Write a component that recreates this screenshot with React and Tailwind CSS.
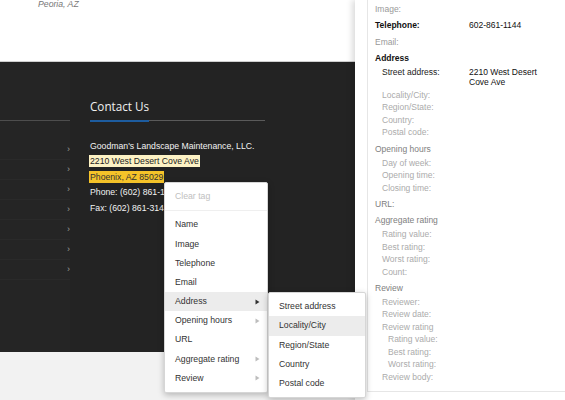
import React from "react";

const panelRows = [
  { label: "Image:", kind: "top", tone: "mid" },
  { label: "Telephone:", kind: "top", tone: "strong", value: "602-861-1144" },
  { label: "Email:", kind: "top", tone: "mid" },
  { label: "Address", kind: "top", tone: "strong" },
  { label: "Street address:", kind: "first", tone: "dark", value: "2210 West Desert Cove Ave" },
  { label: "Locality/City:", kind: "sub", tone: "light" },
  { label: "Region/State:", kind: "sub", tone: "light" },
  { label: "Country:", kind: "sub", tone: "light" },
  { label: "Postal code:", kind: "sub", tone: "light" },
  { label: "Opening hours", kind: "top", tone: "head" },
  { label: "Day of week:", kind: "first", tone: "light" },
  { label: "Opening time:", kind: "sub", tone: "light" },
  { label: "Closing time:", kind: "sub", tone: "light" },
  { label: "URL:", kind: "top", tone: "head" },
  { label: "Aggregate rating", kind: "top", tone: "head" },
  { label: "Rating value:", kind: "first", tone: "light" },
  { label: "Best rating:", kind: "sub", tone: "light" },
  { label: "Worst rating:", kind: "sub", tone: "light" },
  { label: "Count:", kind: "sub", tone: "light" },
  { label: "Review", kind: "top", tone: "head" },
  { label: "Reviewer:", kind: "first", tone: "light" },
  { label: "Review date:", kind: "sub", tone: "light" },
  { label: "Review rating", kind: "sub", tone: "light" },
  { label: "Rating value:", kind: "first2", tone: "light" },
  { label: "Best rating:", kind: "sub2", tone: "light" },
  { label: "Worst rating:", kind: "sub2", tone: "light" },
  { label: "Review body:", kind: "sub", tone: "light" },
];

const toneClass = {
  strong: "text-[#111] font-bold",
  dark: "text-[#222]",
  mid: "text-[#999]",
  head: "text-[#808080]",
  light: "text-[#ababab]",
};

const kindClass = {
  top: "mt-[3.75px]",
  first: "mt-[1.5px] pl-[7px]",
  sub: "pl-[7px]",
  first2: "pl-[13px]",
  sub2: "pl-[13px]",
};

const menuItems = [
  { label: "Name" },
  { label: "Image" },
  { label: "Telephone" },
  { label: "Email" },
  { label: "Address", arrow: "dark", active: true },
  { label: "Opening hours", arrow: "light" },
  { label: "URL" },
  { label: "Aggregate rating", arrow: "light" },
  { label: "Review", arrow: "light" },
];

const subItems = ["Street address", "Locality/City", "Region/State", "Country", "Postal code"];

const Arrow = ({ dark }) => (
  <svg width="5" height="6" viewBox="0 0 5 6" className="shrink-0">
    <path d="M0.5 0.5 L4.5 3 L0.5 5.5 Z" fill={dark ? "#333" : "#bdbdbd"} />
  </svg>
);

const App = () => {
  return (
    <div className="relative w-[565px] h-[400px] overflow-hidden flex font-['Liberation_Sans',Arial,sans-serif]">
      {/* Page behind */}
      <div className="w-[355px] shrink-0 flex flex-col">
        <div className="h-[62px] bg-white border-b border-[#cfcfcf]">
          <p className="pl-[38px] -mt-[3px] text-[8.7px] italic text-[#777] leading-[14px]">
            Peoria, AZ
          </p>
        </div>

        <div className="h-[290px] bg-[#232323] flex">
          {/* Left column */}
          <div className="w-[70px] shrink-0 bg-[#252525]">
            <div className="h-[59px] border-b border-[#4d4d4d]"></div>
            <div className="mt-[19px]">
              {[0, 1, 2, 3, 4, 5, 6].map((i) => (
                <div
                  key={i}
                  className="h-[20px] flex items-center justify-end border-b border-[#2a2a2a] text-[9px] text-[#9a9a9a]"
                >
                  ›
                </div>
              ))}
            </div>
          </div>

          {/* Contact column */}
          <div className="ml-[20px] w-[175px]">
            <div className="h-[59px] flex flex-col justify-end">
              <h2 className="font-['Open_Sans',sans-serif] text-[11.7px] leading-[16px] text-[#f0f0f0] mb-[6px]">
                Contact Us
              </h2>
              <div className="relative h-[1px] bg-[#5a5a5a]">
                <div className="absolute left-0 top-0 w-[59px] h-[2px] bg-[#1d5c9f]"></div>
              </div>
            </div>
            <div className="mt-[17.5px] text-[8.7px] leading-[15.5px] text-[#f2f2f2]">
              <div>Goodman's Landscape Maintenance, LLC.</div>
              <div>
                <span className="inline-block -ml-[1px] px-[1px] leading-[12px] bg-[#fdf2c4] text-[#222]">
                  2210 West Desert Cove Ave
                </span>
              </div>
              <div>
                <span className="inline-block -ml-[1px] px-[1px] leading-[12px] bg-[#f5c329] text-[#333]">
                  Phoenix, AZ 85029
                </span>
              </div>
              <div>Phone: (602) 861-1144</div>
              <div>Fax: (602) 861-3144</div>
            </div>
          </div>
        </div>

        <div className="flex-1 bg-[#f2f2f2]"></div>
      </div>

      {/* Right panel */}
      <div className="flex-1 bg-white pl-[12px] shadow-[-3px_0_6px_rgba(0,0,0,0.14)] z-10">
        <div className="h-[392px] border-l border-b border-[#e6e6e6] pl-[7px] text-[8.5px]">
          {panelRows.map((row, i) => (
            <div
              key={i}
              className={`flex leading-[12.5px] ${i === 0 ? "pt-[3px]" : kindClass[row.kind]}`}
            >
              <div
                className={`shrink-0 ${toneClass[row.tone]} ${
                  row.kind === "top"
                    ? "w-[94px]"
                    : row.kind === "first2" || row.kind === "sub2"
                    ? "w-[81px]"
                    : "w-[87px]"
                }`}
              >
                {row.label}
              </div>
              {row.value && (
                <div
                  className={`text-[#111] ${
                    row.kind === "first" ? "w-[80px] leading-[10px] pt-[1.5px] pb-[1.5px]" : ""
                  }`}
                >
                  {row.value}
                </div>
              )}
            </div>
          ))}
        </div>
      </div>

      {/* Context menu */}
      <div className="absolute left-[164px] top-[182px] z-20 w-[104px] bg-white border border-[#d6d6d6] rounded-[2px] shadow-[0_2px_6px_rgba(0,0,0,0.25)] pt-[4px] pb-[4px] text-[8.7px]">
        <div className="h-[19.3px] flex items-center pl-[10px] text-[#c0c0c0]">Clear tag</div>
        <div className="my-[4px] h-[1px] bg-[#efefef]"></div>
        {menuItems.map((item) => (
          <div
            key={item.label}
            className={`h-[19.2px] flex items-center justify-between pl-[10px] pr-[7px] text-[#333] ${
              item.active ? "bg-[#ececec]" : ""
            }`}
          >
            <span>{item.label}</span>
            {item.arrow && <Arrow dark={item.arrow === "dark"} />}
          </div>
        ))}

        {/* Submenu */}
        <div className="absolute left-[103px] top-[109px] w-[98px] bg-white border border-[#d6d6d6] rounded-[2px] shadow-[0_2px_6px_rgba(0,0,0,0.25)] pt-[4px] pb-[4px]">
          {subItems.map((s) => (
            <div
              key={s}
              className={`h-[19.3px] flex items-center pl-[10px] text-[#333] ${
                s === "Locality/City" ? "bg-[#ececec]" : ""
              }`}
            >
              {s}
            </div>
          ))}
        </div>
      </div>
    </div>
  );
};

export default App;
